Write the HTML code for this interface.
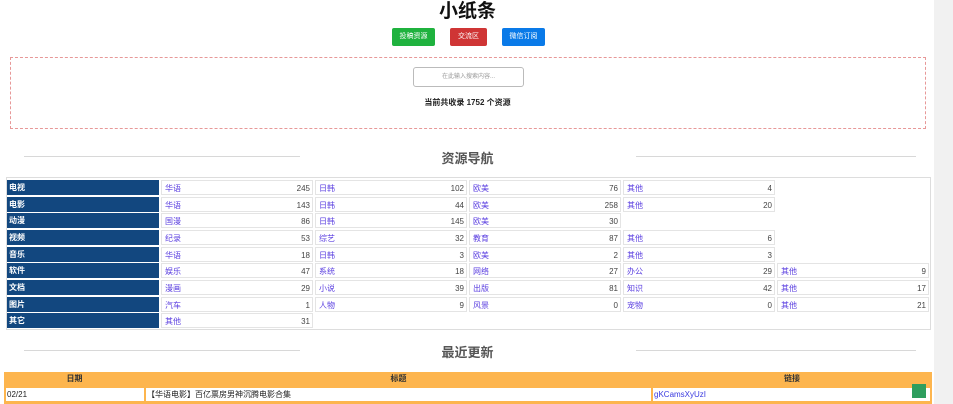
<!DOCTYPE html>
<html><head><meta charset="utf-8"><style>
*{margin:0;padding:0;box-sizing:border-box}
body{width:953px;height:404px;overflow:hidden;background:#fff;position:relative;font-family:"Liberation Sans","Noto Sans CJK SC",sans-serif;}
.a{position:absolute}
.btn{position:absolute;top:28px;height:18px;color:#fff;font-size:7px;line-height:18px;text-align:center;border-radius:2px}
.c{position:absolute;height:15px;font-size:8px;line-height:15px;border:1px solid #e4e4e4;background:#fff}
.c span{position:absolute;left:3px;color:#5a3ee0}
.c b{position:absolute;right:2px;font-weight:normal;color:#444}
.k{position:absolute;left:7px;width:152px;height:15px;background:#12477f;color:#fff;font-size:8px;line-height:15px;padding-left:2px;font-weight:bold}
.hl{position:absolute;height:1px;background:#d8d8d8}
</style></head><body>
<div class="a" style="left:934px;top:0;width:19px;height:404px;background:#f1f1f1"></div>
<div class="a" style="left:0;top:1px;width:953px;text-align:center;font-size:19px;font-weight:bold;color:#111;padding-right:18px;line-height:22px">小纸条</div>
<div class="btn" style="left:392px;width:43px;background:#1fb23e">投稿资源</div>
<div class="btn" style="left:450px;width:37px;background:#cf3535">交流区</div>
<div class="btn" style="left:502px;width:43px;background:#0a7ae8">微信订阅</div>
<div class="a" style="left:10px;top:57px;width:916px;height:72px;border:1px dashed #e79898"></div>
<div class="a" style="left:413px;top:67px;width:111px;height:20px;border:1px solid #bbb;border-radius:3px;font-size:6px;color:#999;line-height:18px;text-align:center">在此输入搜索内容...</div>
<div class="a" style="left:0;top:97px;width:935px;text-align:center;font-size:8px;font-weight:bold;color:#222">当前共收录 1752 个资源</div>
<div class="hl" style="left:24px;top:156px;width:276px"></div>
<div class="hl" style="left:636px;top:156px;width:280px"></div>
<div class="a" style="left:0;top:148px;width:935px;text-align:center;font-size:13px;font-weight:bold;color:#555">资源导航</div>
<div class="a" style="left:6px;top:177px;width:925px;height:153px;border:1px solid #ddd"></div>

<div class="k" style="top:180px">电视</div>
<div class="c" style="left:161px;top:180px;width:152px"><span>华语</span><b>245</b></div>
<div class="c" style="left:315px;top:180px;width:152px"><span>日韩</span><b>102</b></div>
<div class="c" style="left:469px;top:180px;width:152px"><span>欧美</span><b>76</b></div>
<div class="c" style="left:623px;top:180px;width:152px"><span>其他</span><b>4</b></div>

<div class="k" style="top:197px">电影</div>
<div class="c" style="left:161px;top:197px;width:152px"><span>华语</span><b>143</b></div>
<div class="c" style="left:315px;top:197px;width:152px"><span>日韩</span><b>44</b></div>
<div class="c" style="left:469px;top:197px;width:152px"><span>欧美</span><b>258</b></div>
<div class="c" style="left:623px;top:197px;width:152px"><span>其他</span><b>20</b></div>

<div class="k" style="top:213px">动漫</div>
<div class="c" style="left:161px;top:213px;width:152px"><span>国漫</span><b>86</b></div>
<div class="c" style="left:315px;top:213px;width:152px"><span>日韩</span><b>145</b></div>
<div class="c" style="left:469px;top:213px;width:152px"><span>欧美</span><b>30</b></div>

<div class="k" style="top:230px">视频</div>
<div class="c" style="left:161px;top:230px;width:152px"><span>纪录</span><b>53</b></div>
<div class="c" style="left:315px;top:230px;width:152px"><span>综艺</span><b>32</b></div>
<div class="c" style="left:469px;top:230px;width:152px"><span>教育</span><b>87</b></div>
<div class="c" style="left:623px;top:230px;width:152px"><span>其他</span><b>6</b></div>

<div class="k" style="top:247px">音乐</div>
<div class="c" style="left:161px;top:247px;width:152px"><span>华语</span><b>18</b></div>
<div class="c" style="left:315px;top:247px;width:152px"><span>日韩</span><b>3</b></div>
<div class="c" style="left:469px;top:247px;width:152px"><span>欧美</span><b>2</b></div>
<div class="c" style="left:623px;top:247px;width:152px"><span>其他</span><b>3</b></div>

<div class="k" style="top:263px">软件</div>
<div class="c" style="left:161px;top:263px;width:152px"><span>娱乐</span><b>47</b></div>
<div class="c" style="left:315px;top:263px;width:152px"><span>系统</span><b>18</b></div>
<div class="c" style="left:469px;top:263px;width:152px"><span>网络</span><b>27</b></div>
<div class="c" style="left:623px;top:263px;width:152px"><span>办公</span><b>29</b></div>
<div class="c" style="left:777px;top:263px;width:152px"><span>其他</span><b>9</b></div>

<div class="k" style="top:280px">文档</div>
<div class="c" style="left:161px;top:280px;width:152px"><span>漫画</span><b>29</b></div>
<div class="c" style="left:315px;top:280px;width:152px"><span>小说</span><b>39</b></div>
<div class="c" style="left:469px;top:280px;width:152px"><span>出版</span><b>81</b></div>
<div class="c" style="left:623px;top:280px;width:152px"><span>知识</span><b>42</b></div>
<div class="c" style="left:777px;top:280px;width:152px"><span>其他</span><b>17</b></div>

<div class="k" style="top:297px">图片</div>
<div class="c" style="left:161px;top:297px;width:152px"><span>汽车</span><b>1</b></div>
<div class="c" style="left:315px;top:297px;width:152px"><span>人物</span><b>9</b></div>
<div class="c" style="left:469px;top:297px;width:152px"><span>风景</span><b>0</b></div>
<div class="c" style="left:623px;top:297px;width:152px"><span>宠物</span><b>0</b></div>
<div class="c" style="left:777px;top:297px;width:152px"><span>其他</span><b>21</b></div>

<div class="k" style="top:313px">其它</div>
<div class="c" style="left:161px;top:313px;width:152px"><span>其他</span><b>31</b></div>

<div class="hl" style="left:24px;top:350px;width:276px"></div>
<div class="hl" style="left:636px;top:350px;width:280px"></div>
<div class="a" style="left:0;top:342px;width:935px;text-align:center;font-size:13px;font-weight:bold;color:#555">最近更新</div>

<div class="a" style="left:4px;top:372px;width:928px;height:32px;background:#fdb54e"></div>
<div class="a" style="left:4px;top:373px;width:141px;text-align:center;font-size:8px;font-weight:bold;color:#333">日期</div>
<div class="a" style="left:145px;top:373px;width:507px;text-align:center;font-size:8px;font-weight:bold;color:#333">标题</div>
<div class="a" style="left:652px;top:373px;width:280px;text-align:center;font-size:8px;font-weight:bold;color:#333">链接</div>
<div class="a" style="left:6px;top:388px;width:138px;height:13px;background:#fff;font-size:8px;line-height:13px;color:#222;padding-left:1px">02/21</div>
<div class="a" style="left:146px;top:388px;width:505px;height:13px;background:#fff;font-size:8px;line-height:13px;color:#222;padding-left:1px">【华语电影】百亿票房男神沉腾电影合集</div>
<div class="a" style="left:653px;top:388px;width:277px;height:13px;background:#fff;font-size:8px;line-height:13px;color:#3a3ae0;padding-left:1px">gKCamsXyUzI</div>
<div class="a" style="left:912px;top:384px;width:14px;height:14px;background:#2e9e5e"></div>
</body></html>
